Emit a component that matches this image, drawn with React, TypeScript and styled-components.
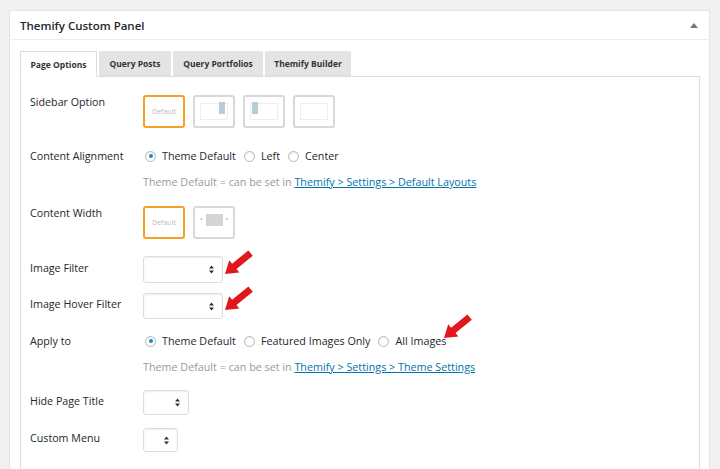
import styled, { createGlobalStyle } from "styled-components";

const GlobalStyle = createGlobalStyle`
  html, body {
    margin: 0;
    padding: 0;
    background: #f1f1f1;
  }
  body {
    font-family: "Open Sans", "Liberation Sans", sans-serif;
    color: #23282d;
  }
`;

const Page = styled.div`
  height: 469px;
  overflow: hidden;
  padding: 10px 10px 0 9px;
  box-sizing: border-box;
`;

const Panel = styled.div`
  background: #fff;
  border: 1px solid #e5e5e5;
  border-bottom: none;
  height: 100%;
  box-sizing: border-box;
`;

const PanelHeader = styled.div`
  height: 28px;
  display: flex;
  align-items: center;
  justify-content: space-between;
  padding: 0 10px 0 10px;
  border-bottom: 1px solid #eee;
`;

const PanelTitle = styled.h2`
  margin: 0;
  font-size: 11.5px;
  font-weight: 600;
  color: #23282d;
`;

const Toggle = styled.span`
  width: 0;
  height: 0;
  border-left: 4px solid transparent;
  border-right: 4px solid transparent;
  border-bottom: 5px solid #777;
  margin-right: 1px;
`;

const PanelBody = styled.div`
  padding: 11px 9px 0 10px;
`;

const Tabs = styled.div`
  display: flex;
  gap: 2px;
  height: 25px;
  position: relative;
  z-index: 1;
`;

const Tab = styled.div<{ $active?: boolean; $w: number }>`
  width: ${(p) => p.$w}px;
  display: flex;
  align-items: center;
  justify-content: center;
  font-size: 8.5px;
  font-weight: 700;
  color: #333;
  box-sizing: border-box;
  background: ${(p) => (p.$active ? "#fff" : "#e4e4e4")};
  border: 1px solid ${(p) => (p.$active ? "#ddd" : "#e4e4e4")};
  border-bottom: ${(p) => (p.$active ? "1px solid #fff" : "1px solid #ddd")};
  height: ${(p) => (p.$active ? "26px" : "25px")};
`;

const TabContent = styled.div`
  border: 1px solid #ddd;
  border-bottom: none;
  height: 420px;
  padding: 18px 0 0 9px;
  box-sizing: border-box;
`;

const Row = styled.div<{ $top: number; $center?: boolean }>`
  display: grid;
  grid-template-columns: 113px 1fr;
  align-items: ${(p) => (p.$center ? "center" : "start")};
  margin-top: ${(p) => p.$top}px;
`;

const Label = styled.div<{ $shift?: number }>`
  font-size: 10.7px;
  line-height: 16px;
  color: #23282d;
  margin-top: ${(p) => p.$shift ?? 0}px;
`;

const Control = styled.div`
  position: relative;
  display: flex;
  flex-direction: column;
  align-items: flex-start;
`;

const OptionGroup = styled.div`
  display: flex;
  gap: 8px;
`;

const OptionBox = styled.div<{ $selected?: boolean }>`
  width: 42px;
  height: 33px;
  box-sizing: border-box;
  border: 2px solid ${(p) => (p.$selected ? "#f5a124" : "#d8d8d8")};
  border-radius: 3px;
  display: flex;
  align-items: center;
  justify-content: center;
  background: #fff;
  font-size: 7px;
  color: #bbb;
`;

const RadioRow = styled.div`
  display: flex;
  align-items: center;
  height: 16px;
  font-size: 10.75px;
  color: #23282d;
`;

const RadioItem = styled.label`
  display: flex;
  align-items: center;
  margin-right: 6px;
  margin-left: 2px;
`;

const Radio = styled.span<{ $checked?: boolean }>`
  width: 11px;
  height: 11px;
  border: 1px solid #b4b9be;
  border-radius: 50%;
  box-sizing: border-box;
  margin-right: 6px;
  display: inline-flex;
  align-items: center;
  justify-content: center;
  box-shadow: inset 0 1px 2px rgba(0, 0, 0, 0.08);

  &::after {
    content: "";
    width: 4px;
    height: 4px;
    border-radius: 50%;
    background: ${(p) => (p.$checked ? "#1e8cbe" : "transparent")};
  }
`;

const Help = styled.div`
  margin-top: 10px;
  font-size: 10.75px;
  line-height: 16px;
  color: #999;
`;

const HelpLink = styled.a`
  color: #0073aa;
  text-decoration: underline;
`;

const Select = styled.div<{ $w: number; $h: number }>`
  width: ${(p) => p.$w}px;
  height: ${(p) => p.$h}px;
  box-sizing: border-box;
  border: 1px solid #ddd;
  border-radius: 3px;
  box-shadow: inset 0 1px 2px rgba(0, 0, 0, 0.07);
  background: #fff;
  display: flex;
  align-items: center;
  justify-content: flex-end;
  padding-right: 8px;
`;

const Arrow = styled.svg<{ $x: number; $y: number }>`
  position: absolute;
  left: ${(p) => p.$x}px;
  top: ${(p) => p.$y}px;
  width: 30px;
  height: 26px;
`;

const UpDown = () => (
  <svg width="5" height="9" viewBox="0 0 5 9">
    <path d="M2.5 0.5 L5 3.6 L0 3.6 Z M2.5 8.5 L5 5.4 L0 5.4 Z" fill="#333" />
  </svg>
);

const RedArrow = ({ x, y }: { x: number; y: number }) => (
  <Arrow $x={x} $y={y} viewBox="0 0 30 26">
    <polygon
      points="1,25 5.2,11.2 8.1,14.7 24.4,1.4 28.8,6.8 12.5,20.1 15.4,23.6"
      fill="#e2171d"
    />
  </Arrow>
);

const LayoutIcon = ({ side }: { side?: "left" | "right" }) => (
  <svg width="34" height="25" viewBox="0 0 34 25">
    <rect x="3.5" y="4.5" width="27" height="16" fill="#fff" stroke="#eee" />
    {side === "right" && <rect x="22" y="3" width="6" height="12" fill="#b9cdd8" />}
    {side === "left" && <rect x="5" y="3" width="6" height="12" fill="#b9cdd8" />}
  </svg>
);

const WidthIcon = () => (
  <svg width="34" height="25" viewBox="0 0 34 25">
    <rect x="9" y="4" width="17" height="12" fill="#d4d4d4" />
    <circle cx="4.5" cy="9" r="0.9" fill="#bbb" />
    <circle cx="30" cy="9" r="0.9" fill="#bbb" />
  </svg>
);

export default function App() {
  return (
    <>
      <GlobalStyle />
      <Page>
        <Panel>
          <PanelHeader>
            <PanelTitle>Themify Custom Panel</PanelTitle>
            <Toggle />
          </PanelHeader>
          <PanelBody>
            <Tabs>
              <Tab $active $w={77}>Page Options</Tab>
              <Tab $w={72}>Query Posts</Tab>
              <Tab $w={90}>Query Portfolios</Tab>
              <Tab $w={86}>Themify Builder</Tab>
            </Tabs>
            <TabContent>
              <Row $top={0}>
                <Label $shift={-1}>Sidebar Option</Label>
                <Control>
                  <OptionGroup>
                    <OptionBox $selected>Default</OptionBox>
                    <OptionBox>
                      <LayoutIcon side="right" />
                    </OptionBox>
                    <OptionBox>
                      <LayoutIcon side="left" />
                    </OptionBox>
                    <OptionBox>
                      <LayoutIcon />
                    </OptionBox>
                  </OptionGroup>
                </Control>
              </Row>

              <Row $top={20}>
                <Label>Content Alignment</Label>
                <Control>
                  <RadioRow>
                    <RadioItem>
                      <Radio $checked />
                      Theme Default
                    </RadioItem>
                    <RadioItem>
                      <Radio />
                      Left
                    </RadioItem>
                    <RadioItem>
                      <Radio />
                      Center
                    </RadioItem>
                  </RadioRow>
                  <Help>
                    Theme Default = can be set in{" "}
                    <HelpLink>Themify &gt; Settings &gt; Default Layouts</HelpLink>
                  </Help>
                </Control>
              </Row>

              <Row $top={16}>
                <Label $shift={-1}>Content Width</Label>
                <Control>
                  <OptionGroup>
                    <OptionBox $selected>Default</OptionBox>
                    <OptionBox>
                      <WidthIcon />
                    </OptionBox>
                  </OptionGroup>
                </Control>
              </Row>

              <Row $top={17} $center>
                <Label $shift={-4}>Image Filter</Label>
                <Control>
                  <Select $w={80} $h={27}>
                    <UpDown />
                  </Select>
                  <RedArrow x={81} y={-7} />
                </Control>
              </Row>

              <Row $top={10} $center>
                <Label $shift={-4}>Image Hover Filter</Label>
                <Control>
                  <Select $w={80} $h={26}>
                    <UpDown />
                  </Select>
                  <RedArrow x={81} y={-8} />
                </Control>
              </Row>

              <Row $top={14}>
                <Label>Apply to</Label>
                <Control>
                  <RadioRow>
                    <RadioItem>
                      <Radio $checked />
                      Theme Default
                    </RadioItem>
                    <RadioItem>
                      <Radio />
                      Featured Images Only
                    </RadioItem>
                    <RadioItem>
                      <Radio />
                      All Images
                    </RadioItem>
                  </RadioRow>
                  <Help>
                    Theme Default = can be set in{" "}
                    <HelpLink>Themify &gt; Settings &gt; Theme Settings</HelpLink>
                  </Help>
                  <RedArrow x={300} y={-20} />
                </Control>
              </Row>

              <Row $top={15} $center>
                <Label $shift={-4}>Hide Page Title</Label>
                <Control>
                  <Select $w={46} $h={25}>
                    <UpDown />
                  </Select>
                </Control>
              </Row>

              <Row $top={13} $center>
                <Label $shift={-4}>Custom Menu</Label>
                <Control>
                  <Select $w={35} $h={24}>
                    <UpDown />
                  </Select>
                </Control>
              </Row>
            </TabContent>
          </PanelBody>
        </Panel>
      </Page>
    </>
  );
}
